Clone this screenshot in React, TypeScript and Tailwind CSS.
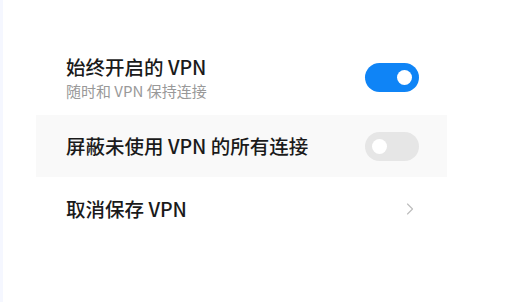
import { ChevronRight } from "lucide-react";

const font = { fontFamily: '"Noto Sans CJK SC", "Noto Sans", sans-serif' };

function Toggle({ on }: { on: boolean }) {
  return (
    <div
      className={`flex h-[29px] w-[54px] shrink-0 items-center rounded-full px-[7px] ${
        on ? "justify-end bg-[#0f84f6]" : "justify-start bg-[#e6e6e6]"
      }`}
    >
      <div className="h-[15px] w-[15px] rounded-full bg-white" />
    </div>
  );
}

export default function App() {
  return (
    <div className="flex h-[302px] w-[506px] bg-white" style={font}>
      {/* left edge strip */}
      <div className="h-full w-[3px] bg-[#f5f7ff]" />

      <div className="flex flex-col pl-[33px] pt-[40px]">
        {/* always-on */}
        <div className="flex h-[75px] w-[411px] items-center justify-between pl-[30px] pr-[28px]">
          <div className="flex flex-col">
            <span className="text-[19.5px] font-medium leading-[24px] text-[#1a1a1a]">始终开启的 VPN</span>
            <span className="mt-[2px] text-[15px] leading-[20px] text-[#999999]">随时和 VPN 保持连接</span>
          </div>
          <Toggle on />
        </div>

        {/* block without vpn */}
        <div className="flex h-[62px] w-[411px] items-center justify-between bg-[#f9f9f9] pl-[30px] pr-[28px]">
          <span className="text-[19.5px] font-medium leading-[24px] text-[#1a1a1a]">屏蔽未使用 VPN 的所有连接</span>
          <Toggle on={false} />
        </div>

        {/* forget */}
        <div className="flex h-[64px] w-[411px] items-center justify-between pl-[30px] pr-[28px]">
          <span className="text-[19.5px] font-medium leading-[24px] text-[#1a1a1a]">取消保存 VPN</span>
          <ChevronRight size={20} strokeWidth={1.4} className="mr-[-1px] text-[#bdbdbd]" />
        </div>
      </div>
    </div>
  );
}
